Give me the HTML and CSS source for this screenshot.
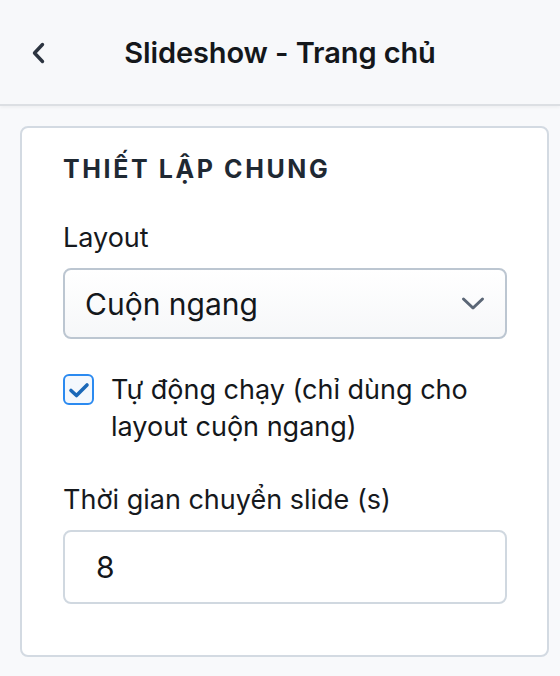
FILE: index.html
```html
<!DOCTYPE html>
<html lang="vi">
<head>
<meta charset="utf-8">
<title>Slideshow - Trang chủ</title>
<link rel="stylesheet" href="styles.css">
</head>
<body>
<header class="topbar">
  <button class="back" aria-label="Quay lại">
    <svg width="16" height="24" viewBox="0 0 16 24"><path d="M12.5 3.5 L4.5 12 L12.5 20.5" fill="none" stroke="#2c3440" stroke-width="3.4" stroke-linecap="round" stroke-linejoin="round"/></svg>
  </button>
  <h1 class="title">Slideshow - Trang chủ</h1>
  <span class="spacer"></span>
</header>
<main class="main">
  <section class="card">
    <h2 class="heading">THIẾT LẬP CHUNG</h2>
    <div class="field">
      <label class="label">Layout</label>
      <div class="select">
        <span>Cuộn ngang</span>
        <svg width="24" height="16" viewBox="0 0 24 16"><path d="M2.5 3 L12 12 L21.5 3" fill="none" stroke="#5b6676" stroke-width="3" stroke-linecap="round" stroke-linejoin="round"/></svg>
      </div>
    </div>
    <div class="check-row">
      <span class="checkbox">
        <svg width="22" height="16" viewBox="0 0 22 16"><path d="M3 8.5 L8.5 13.5 L19 3" fill="none" stroke="#1b68b8" stroke-width="3.6" stroke-linecap="round" stroke-linejoin="round"/></svg>
      </span>
      <span class="check-text">Tự động chạy (chỉ dùng cho layout cuộn ngang)</span>
    </div>
    <div class="field">
      <label class="label label-time">Thời gian chuyển slide (s)</label>
      <div class="input">8</div>
    </div>
  </section>
</main>
</body>
</html>
```
FILE: styles.css
```css
* { box-sizing: border-box; }
html, body { margin: 0; padding: 0; }
body {
  background: #f8f9fb;
  font-family: Inter, "Noto Sans", sans-serif;
  color: #15181c;
  width: 560px;
  height: 676px;
  overflow: hidden;
}
.topbar {
  height: 106px;
  background: #f7f8fa;
  border-bottom: 2px solid #dcdfe3;
  box-shadow: 0 2px 3px rgba(0,0,0,0.04);
  display: grid;
  grid-template-columns: 1fr auto 1fr;
  align-items: center;
  padding: 0 30px;
}
.back {
  justify-self: start;
  border: 0;
  background: none;
  padding: 0;
  width: 20px;
  height: 24px;
  display: flex;
  align-items: center;
  margin-top: 2px;
}
.title {
  margin: 0;
  text-align: center;
  font-size: 29px;
  font-weight: 600;
  color: #14171b;
  letter-spacing: -0.1px;
}
.main {
  padding: 20px 11px 0 20px;
}
.card {
  background: #fff;
  border: 2px solid #d3dae2;
  border-radius: 8px;
  padding: 25px 40px 51px 41px;
}
.heading {
  margin: 0 0 37px;
  font-size: 25px;
  font-weight: 650;
  letter-spacing: 2.6px;
  color: #1f2933;
  line-height: 32px;
}
.field { display: flex; flex-direction: column; }
.label {
  font-size: 27px;
  line-height: 32px;
  color: #16191d;
  margin-bottom: 14px;
}
.label-time { margin-bottom: 14px; }
.select {
  height: 71px;
  border: 2px solid #bcc6d1;
  border-radius: 8px;
  background: linear-gradient(#ffffff, #f6f7f9);
  display: flex;
  align-items: center;
  justify-content: space-between;
  padding: 0 20px 0 20px;
  font-size: 30px;
  color: #14171b;
}
.check-row {
  display: flex;
  align-items: flex-start;
  gap: 17px;
  margin-top: 32px;
  margin-bottom: 39px;
}
.checkbox {
  flex: none;
  width: 31px;
  height: 31px;
  margin-top: 3px;
  border: 2px solid #2b8af0;
  border-radius: 6px;
  background: #f4f8fd;
  display: flex;
  align-items: center;
  justify-content: center;
}
.check-text {
  font-size: 27px;
  line-height: 37px;
  color: #14171b;
}
.input {
  height: 74px;
  border: 2px solid #d0d8e0;
  border-radius: 8px;
  background: #fff;
  display: flex;
  align-items: center;
  padding: 0 31px;
  font-size: 30px;
  color: #14171b;
}
```
